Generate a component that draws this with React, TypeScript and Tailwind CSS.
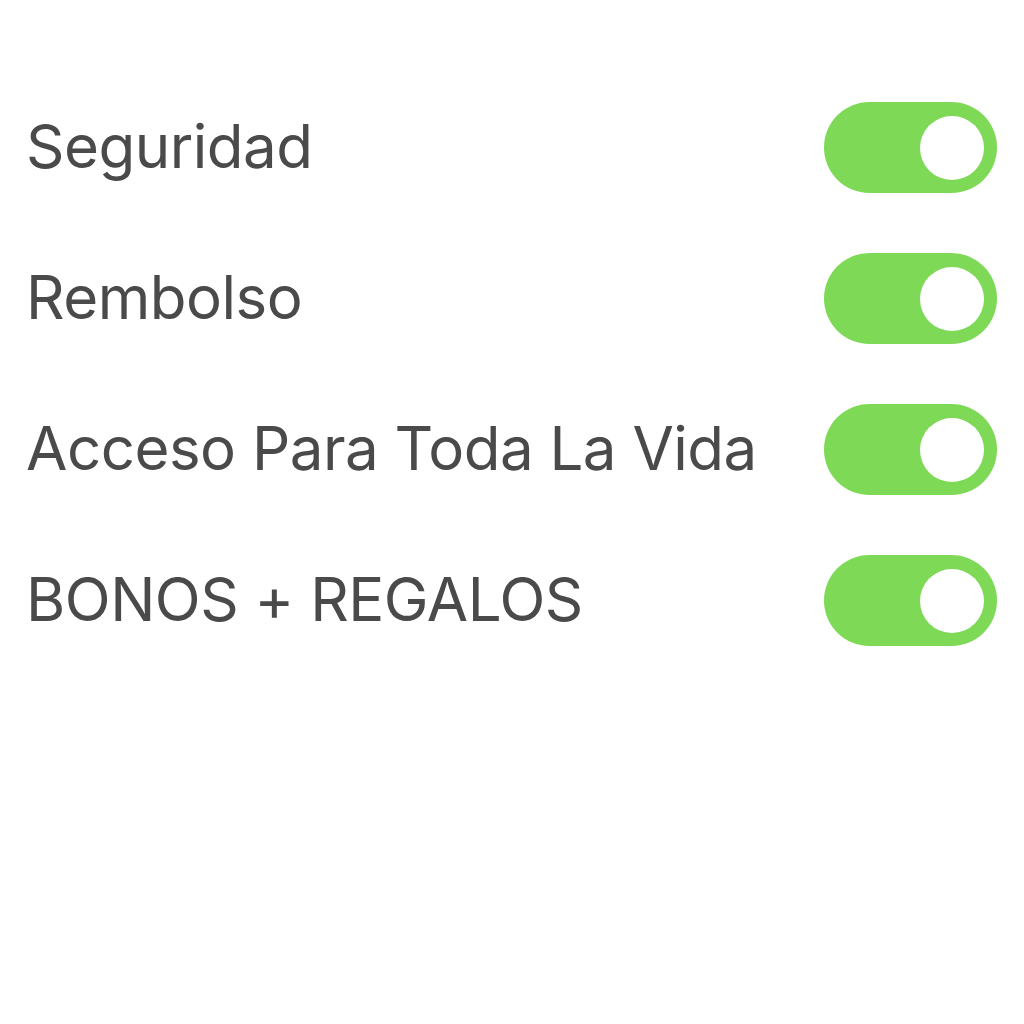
const items = [
  "Seguridad",
  "Rembolso",
  "Acceso Para Toda La Vida",
  "BONOS + REGALOS",
];

function Toggle() {
  return (
    <div className="flex h-[91px] w-[173px] shrink-0 items-center justify-end rounded-full bg-[#7ed957] pr-[13px]">
      <div className="h-[64px] w-[64px] rounded-full bg-white" />
    </div>
  );
}

export default function App() {
  return (
    <div
      className="flex h-[1024px] w-[1024px] flex-col gap-[60px] bg-white pl-[26px] pr-[27px] pt-[102px]"
      style={{ fontFamily: "Inter, 'Noto Sans', sans-serif" }}
    >
      {items.map((label) => (
        <div key={label} className="flex h-[91px] items-center justify-between">
          <span className="pb-[3px] text-[60px] leading-none tracking-[-0.5px] text-[#4a4a4a]">
            {label}
          </span>
          <Toggle />
        </div>
      ))}
    </div>
  );
}
